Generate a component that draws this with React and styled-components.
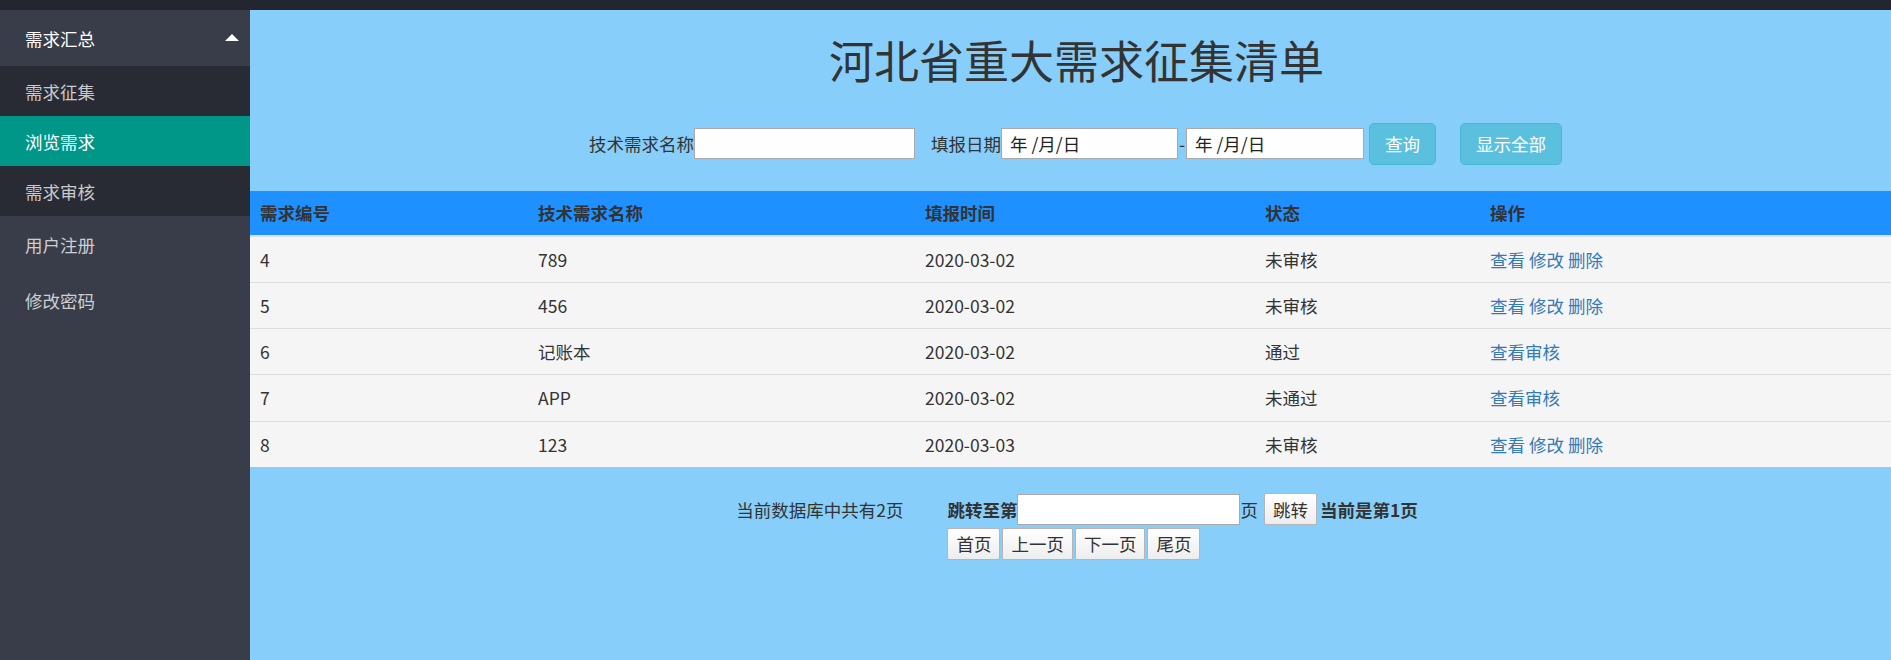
import React from "react";
import styled, { createGlobalStyle } from "styled-components";

const GlobalStyle = createGlobalStyle`
  html, body { margin: 0; padding: 0; }
  body {
    font-family: "Noto Sans CJK SC", "Noto Sans", sans-serif;
    font-size: 17.5px;
    line-height: 25px;
    color: #333;
  }
  * { box-sizing: border-box; }
`;

const Page = styled.div`
  display: flex;
  flex-direction: column;
  height: 100vh;
  min-height: 660px;
`;

const TopBar = styled.div`
  height: 10px;
  background: #23262e;
  flex: none;
`;

const Body = styled.div`
  display: flex;
  flex: 1;
`;

const Sidebar = styled.nav`
  width: 250px;
  flex: none;
  background: #393d49;
`;

const NavItem = styled.div`
  display: flex;
  align-items: center;
  justify-content: space-between;
  height: 56px;
  padding: 0 11px 0 25px;
  color: ${(p) => (p.$open ? "#fff" : "rgba(255,255,255,0.75)")};
`;

const Caret = styled.span`
  width: 0;
  height: 0;
  border-style: solid;
  border-width: 0 7.5px 7.5px 7.5px;
  border-color: transparent transparent #fff transparent;
  margin-bottom: 2px;
`;

const SubList = styled.div`
  background: #282b33;
`;

const SubItem = styled.div`
  display: flex;
  align-items: center;
  height: 50px;
  padding-left: 25px;
  background: ${(p) => (p.$active ? "#009688" : "transparent")};
  color: ${(p) => (p.$active ? "#fff" : "rgba(255,255,255,0.75)")};
`;

const Main = styled.main`
  flex: 1;
  background: #87cefa;
  display: flex;
  flex-direction: column;
`;

const Title = styled.h1`
  margin: 25px 0 0;
  font-size: 45px;
  line-height: 49.5px;
  font-weight: 400;
  text-align: center;
  color: #333;
  padding-left: 12px;
`;

const SearchBar = styled.div`
  display: flex;
  align-items: center;
  justify-content: center;
  height: 42px;
  margin-top: 38px;
  padding-left: 10px;
`;

const Label = styled.span`
  margin-left: ${(p) => p.$ml || 0}px;
  white-space: nowrap;
  color: #333;
`;

const TextInput = styled.input`
  width: ${(p) => p.$w}px;
  height: 31px;
  border: 1px solid #a9a9a9;
  background: #fff;
  font: inherit;
  padding: 0 8px;
  outline: none;
  &::placeholder { color: #222; opacity: 1; }
`;

const Dash = styled.span`
  width: 8px;
  text-align: center;
`;

const InfoButton = styled.button`
  margin-left: ${(p) => p.$ml || 0}px;
  height: 42px;
  padding: 0 15px;
  font: inherit;
  color: #fff;
  background: #5bc0de;
  border: 1px solid #46b8da;
  border-radius: 5px;
`;

const Table = styled.table`
  width: 100%;
  border-collapse: collapse;
  table-layout: fixed;
  margin-top: 26px;
`;

const Th = styled.th`
  text-align: left;
  font-weight: 700;
  padding: 9px 10px 10px;
  background: #1e90ff;
  color: #333;
  border-bottom: 2px solid #ddd;
`;

const Td = styled.td`
  padding: 10px 10px 10.25px;
  background: #f5f5f5;
  border-top: 1px solid #ddd;
  color: #333;
`;

const Link = styled.a`
  color: #337ab7;
  text-decoration: none;
  margin-right: ${(p) => (p.$spaced ? "4px" : "0")};
`;

const Pager = styled.div`
  display: flex;
  justify-content: center;
  align-items: flex-start;
  gap: 44px;
  margin-top: 26px;
  padding-left: 13px;
`;

const PageCount = styled.span`
  line-height: 33px;
`;

const PagerControls = styled.div`
  display: flex;
  flex-direction: column;
  gap: 2px;
`;

const PagerLine = styled.div`
  display: flex;
  align-items: center;
  height: ${(p) => p.$h}px;
  gap: ${(p) => p.$gap || 0}px;
`;

const Strong = styled.b`
  font-weight: 700;
`;

const PlainButton = styled.button`
  height: 32px;
  padding: 0 8px;
  font: inherit;
  color: #333;
  background: linear-gradient(#ffffff, #ededed);
  border: 1px solid #b5b5b5;
  border-radius: 2px;
  margin: ${(p) => p.$m || "0"};
`;

const rows = [
  { id: 4, name: "789", date: "2020-03-02", status: "未审核", pending: true },
  { id: 5, name: "456", date: "2020-03-02", status: "未审核", pending: true },
  { id: 6, name: "记账本", date: "2020-03-02", status: "通过" },
  { id: 7, name: "APP", date: "2020-03-02", status: "未通过" },
  { id: 8, name: "123", date: "2020-03-03", status: "未审核", pending: true },
];

export default function App() {
  return (
    <>
      <GlobalStyle />
      <Page>
        <TopBar />
        <Body>
          <Sidebar>
            <NavItem $open>
              <span>需求汇总</span>
              <Caret />
            </NavItem>
            <SubList>
              <SubItem>需求征集</SubItem>
              <SubItem $active>浏览需求</SubItem>
              <SubItem>需求审核</SubItem>
            </SubList>
            <NavItem>
              <span>用户注册</span>
            </NavItem>
            <NavItem>
              <span>修改密码</span>
            </NavItem>
          </Sidebar>
          <Main>
            <Title>河北省重大需求征集清单</Title>
            <SearchBar>
              <Label>技术需求名称</Label>
              <TextInput $w={221} />
              <Label $ml={16}>填报日期</Label>
              <TextInput $w={177} placeholder="年 /月/日" />
              <Dash>-</Dash>
              <TextInput $w={178} placeholder="年 /月/日" />
              <InfoButton $ml={5}>查询</InfoButton>
              <InfoButton $ml={24}>显示全部</InfoButton>
            </SearchBar>
            <Table>
              <colgroup>
                <col style={{ width: 278 }} />
                <col style={{ width: 387 }} />
                <col style={{ width: 340 }} />
                <col style={{ width: 225 }} />
                <col />
              </colgroup>
              <thead>
                <tr>
                  <Th>需求编号</Th>
                  <Th>技术需求名称</Th>
                  <Th>填报时间</Th>
                  <Th>状态</Th>
                  <Th>操作</Th>
                </tr>
              </thead>
              <tbody>
                {rows.map((r) => (
                  <tr key={r.id}>
                    <Td>{r.id}</Td>
                    <Td>{r.name}</Td>
                    <Td>{r.date}</Td>
                    <Td>{r.status}</Td>
                    <Td>
                      {r.pending ? (
                        <>
                          <Link $spaced>查看</Link>
                          <Link $spaced>修改</Link>
                          <Link>删除</Link>
                        </>
                      ) : (
                        <Link>查看审核</Link>
                      )}
                    </Td>
                  </tr>
                ))}
              </tbody>
            </Table>
            <Pager>
              <PageCount>当前数据库中共有2页</PageCount>
              <PagerControls>
                <PagerLine $h={33}>
                  <Strong>跳转至第</Strong>
                  <TextInput $w={223} />
                  <span>页</span>
                  <PlainButton $m="0 3px 0 6px">跳转</PlainButton>
                  <Strong>当前是第1页</Strong>
                </PagerLine>
                <PagerLine $h={32} $gap={2}>
                  <PlainButton>首页</PlainButton>
                  <PlainButton>上一页</PlainButton>
                  <PlainButton>下一页</PlainButton>
                  <PlainButton>尾页</PlainButton>
                </PagerLine>
              </PagerControls>
            </Pager>
          </Main>
        </Body>
      </Page>
    </>
  );
}
